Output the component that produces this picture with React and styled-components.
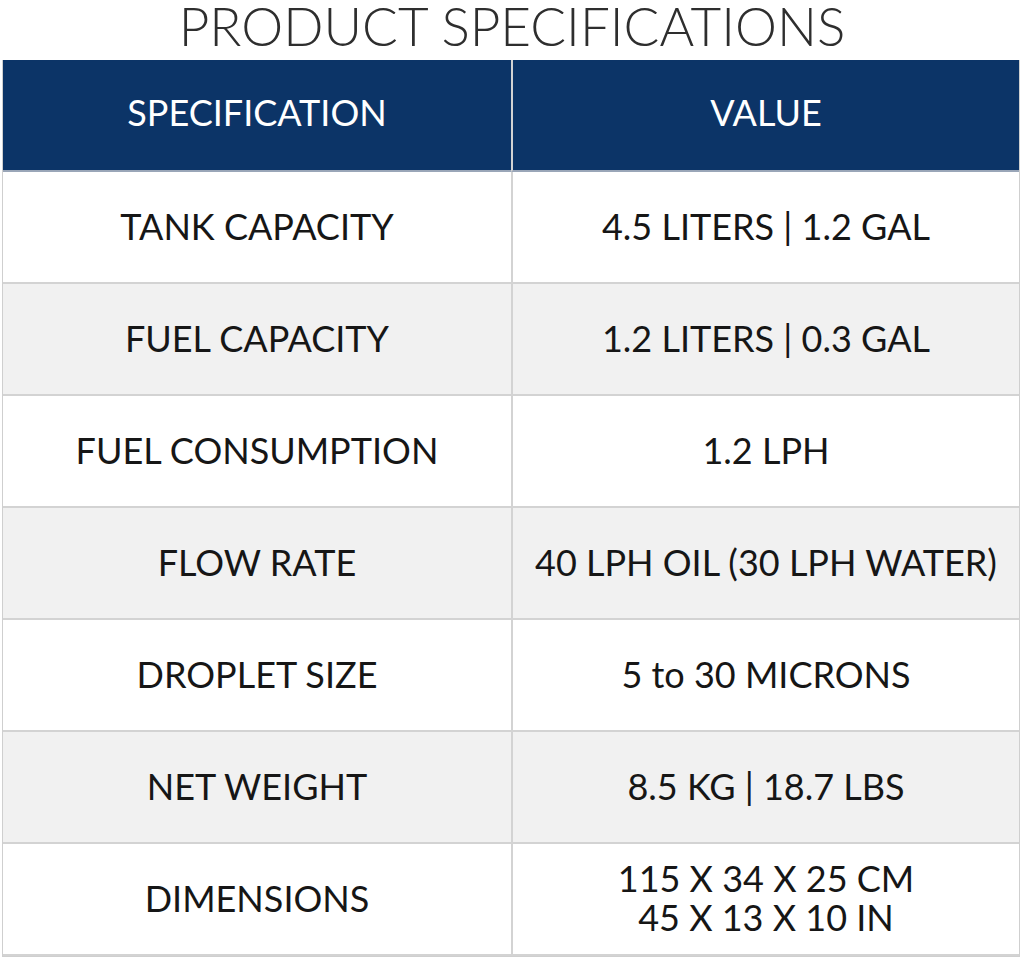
import React from "react";
import styled, { createGlobalStyle } from "styled-components";

const Global = createGlobalStyle`
  html, body { margin: 0; padding: 0; background: #ffffff; }
  body { font-family: Lato, "Open Sans", sans-serif; }
`;

const Page = styled.div`
  width: 1024px;
  height: 962px;
  display: flex;
  flex-direction: column;
  align-items: stretch;
  background: #fff;
`;

const Title = styled.h1`
  margin: 0;
  height: 60px;
  box-sizing: border-box;
  padding-top: 0;
  text-align: center;
  font-family: Lato, sans-serif;
  font-weight: 300;
  font-size: 53px;
  line-height: 52px;
  color: #2e2e2e;
  white-space: nowrap;
`;

const Table = styled.div`
  margin: 0 4px 0 2px;
  display: grid;
  grid-template-columns: 508px 1fr;
  border: 1px solid #cfcfcf;
  border-top: 0;
`;

const Cell = styled.div`
  height: 112px;
  box-sizing: border-box;
  display: flex;
  align-items: center;
  justify-content: center;
  text-align: center;
  white-space: pre-line;
  font-family: Lato, sans-serif;
  font-size: 36px;
  font-weight: 400;
  line-height: 39px;
  color: ${(p) => (p.$head ? "#ffffff" : "#161616")};
  background: ${(p) => (p.$head ? "#0c3467" : p.$alt ? "#f1f1f1" : "#ffffff")};
  border-bottom: 2px solid ${(p) => (p.$head ? "#9aa6b8" : "#d3d3d3")};
  border-left: ${(p) => (p.$right ? "2px solid #d3d3d3" : "0")};
  padding-bottom: ${(p) => (p.$head ? "6px" : "2px")};
`;

const rows = [
  ["TANK CAPACITY", "4.5 LITERS | 1.2 GAL"],
  ["FUEL CAPACITY", "1.2 LITERS | 0.3 GAL"],
  ["FUEL CONSUMPTION", "1.2 LPH"],
  ["FLOW RATE", "40 LPH OIL (30 LPH WATER)"],
  ["DROPLET SIZE", "5 to 30 MICRONS"],
  ["NET WEIGHT", "8.5 KG | 18.7 LBS"],
  ["DIMENSIONS", "115 X 34 X 25 CM\n45 X 13 X 10 IN"],
];

export default function App() {
  return (
    <>
      <Global />
      <Page>
        <Title>PRODUCT SPECIFICATIONS</Title>
        <Table>
          <Cell $head>SPECIFICATION</Cell>
          <Cell $head $right>VALUE</Cell>
          {rows.map(([k, v], i) => (
            <React.Fragment key={k}>
              <Cell $alt={i % 2 === 1}>{k}</Cell>
              <Cell $alt={i % 2 === 1} $right>
                {v}
              </Cell>
            </React.Fragment>
          ))}
        </Table>
      </Page>
    </>
  );
}
